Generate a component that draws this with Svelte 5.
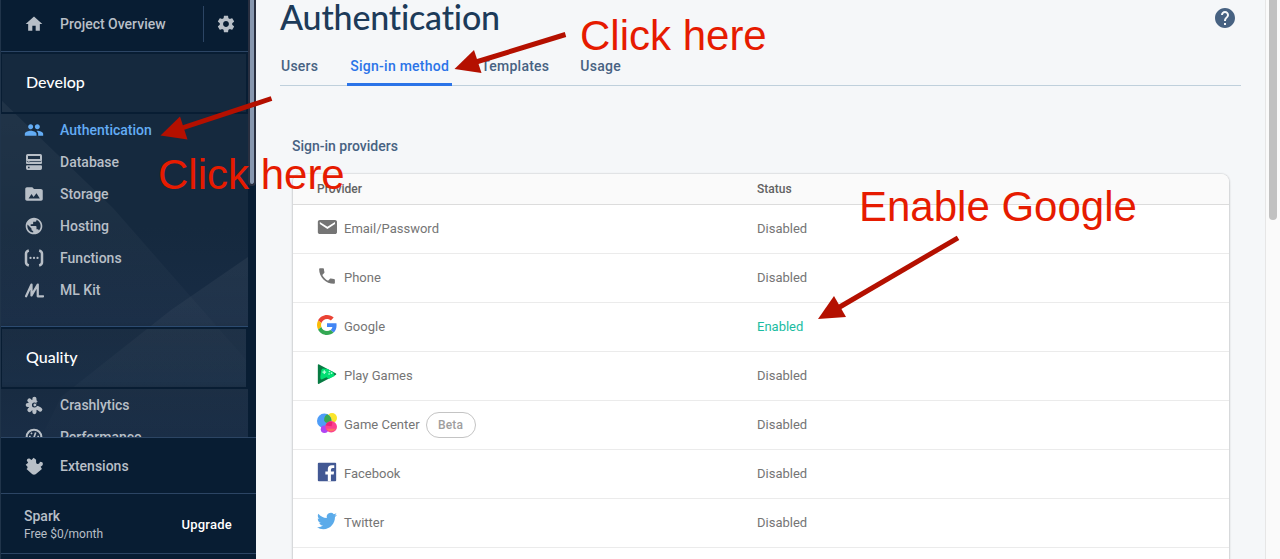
<script>
  const develop = [
    { name: 'Authentication', icon: 'people', active: true },
    { name: 'Database', icon: 'database' },
    { name: 'Storage', icon: 'storage' },
    { name: 'Hosting', icon: 'globe' },
    { name: 'Functions', icon: 'functions' },
    { name: 'ML Kit', icon: 'mlkit' }
  ];
  const quality = [
    { name: 'Crashlytics', icon: 'crash' },
    { name: 'Performance', icon: 'gauge' }
  ];
  const tabs = ['Users', 'Sign-in method', 'Templates', 'Usage'];
  const providers = [
    { name: 'Email/Password', icon: 'mail' },
    { name: 'Phone', icon: 'phone' },
    { name: 'Google', icon: 'google', enabled: true },
    { name: 'Play Games', icon: 'play' },
    { name: 'Game Center', icon: 'gamecenter', beta: true },
    { name: 'Facebook', icon: 'facebook' },
    { name: 'Twitter', icon: 'twitter' }
  ];
</script>

{#snippet icon(name)}
  <svg class="icon" viewBox="0 0 24 24" fill="currentColor" aria-hidden="true">
    {#if name === 'home'}
      <path d="M10 20v-6h4v6h5v-8h3L12 3 2 12h3v8z" />
    {:else if name === 'gear'}
      <path d="M19.43 12.98c.04-.32.07-.64.07-.98s-.03-.66-.07-.98l2.11-1.65c.19-.15.24-.42.12-.64l-2-3.46c-.12-.22-.39-.3-.61-.22l-2.49 1c-.52-.4-1.08-.73-1.69-.98l-.38-2.65C14.46 2.18 14.25 2 14 2h-4c-.25 0-.46.18-.49.42l-.38 2.65c-.61.25-1.17.59-1.69.98l-2.49-1c-.23-.09-.49 0-.61.22l-2 3.46c-.13.22-.07.49.12.64l2.11 1.65c-.04.32-.07.65-.07.98s.03.66.07.98l-2.11 1.65c-.19.15-.24.42-.12.64l2 3.46c.12.22.39.3.61.22l2.49-1c.52.4 1.08.73 1.69.98l.38 2.65c.03.24.24.42.49.42h4c.25 0 .46-.18.49-.42l.38-2.65c.61-.25 1.17-.59 1.69-.98l2.49 1c.23.09.49 0 .61-.22l2-3.46c.12-.22.07-.49-.12-.64l-2.11-1.65zM12 15.500c-1.930 0-3.500-1.570-3.500-3.500s1.570-3.500 3.500-3.500 3.500 1.570 3.500 3.500-1.570 3.500-3.500 3.500z" />
    {:else if name === 'people'}
      <path d="M16 11c1.66 0 2.99-1.34 2.99-3S17.66 5 16 5s-3 1.34-3 3 1.34 3 3 3zm-8 0c1.66 0 2.99-1.34 2.99-3S9.66 5 8 5 5 6.34 5 8s1.34 3 3 3zm0 2c-2.33 0-7 1.17-7 3.5V19h14v-2.5c0-2.33-4.67-3.5-7-3.5zm8 0c-.29 0-.62.02-.97.05 1.16.84 1.97 1.97 1.97 3.45V19h6v-2.5c0-2.33-4.67-3.5-7-3.5z" />
    {:else if name === 'database'}
      <path fill-rule="evenodd" d="M4.400 2.400h15.200a2 2 0 0 1 2 2v5.200q0 2-2 2H4.400q-2 0-2-2V4.400a2 2 0 0 1 2-2zM4.800 4.800v3.600h14.400V4.800zM2.400 10.800h19.200v2.400q0 1.200-1.200 1.200H3.600q-1.200 0-1.200-1.200zM4.800 10.800v1.600h1.900v-1.600zM3.600 15.800h16.800q1.200 0 1.200 1.200v2.600a2 2 0 0 1-2 2H4.400a2 2 0 0 1-2-2V17q0-1.200 1.200-1.200zM4.800 17.600v1.900h1.900v-1.900z" />
    {:else if name === 'storage'}
      <path fill-rule="evenodd" d="M20 6h-8l-2-2H3.500c-1.100 0-2 .9-2 2v12c0 1.100.9 2 2 2h17c1.100 0 2-.9 2-2V8c0-1.100-.9-2-2.500-2zM5.500 17.500l3.500-5.500 2.500 3.500 3.500-4.500 4 6.500z" />
    {:else if name === 'globe'}
      <path d="M12 2C6.480 2 2 6.480 2 12s4.480 10 10 10 10-4.480 10-10S17.520 2 12 2zm-1 17.930c-3.950-.490-7-3.850-7-7.930 0-.620.080-1.210.210-1.790L9 15v1c0 1.100.900 2 2 2v1.930zm6.900-2.540c-.260-.810-1-1.390-1.900-1.390h-1v-3c0-.550-.450-1-1-1H8v-2h2c.550 0 1-.450 1-1V7h2c1.100 0 2-.900 2-2v-.410c2.930 1.190 5 4.060 5 7.410 0 2.080-.800 3.970-2.100 5.390z" />
    {:else if name === 'functions'}
      <path d="M5.800 3Q2.400 4 2.400 7v10q0 3 3.400 4M18.200 3Q21.600 4 21.600 7v10q0 3-3.400 4" fill="none" stroke="currentColor" stroke-width="3" />
      <circle cx="7.800" cy="12" r="1.350" /><circle cx="12" cy="12" r="1.350" /><circle cx="16.200" cy="12" r="1.350" />
    {:else if name === 'mlkit'}
      <path d="M2.500 19.500L9 5.500v12.500M9 18.500L16.500 5.500v14H23" fill="none" stroke="currentColor" stroke-width="2.700" stroke-linejoin="round" stroke-linecap="round" />
    {:else if name === 'crash'}
      <circle cx="12" cy="12" r="6.200" />
      <path d="M12.500 12V4.500M12 12L6.500 6.500M12 12H4.500M12 12L6.500 18M12.500 12v8.500M12 12l7.500 5.500" stroke="currentColor" stroke-width="5" stroke-linecap="round" />
      <path class="hole" d="M15 8.500L20 6v8l-5-1z" />
      <circle class="hole" cx="12.500" cy="12" r="3" />
      <circle cx="13" cy="12" r="1.700" />
    {:else if name === 'gauge'}
      <circle cx="12" cy="12" r="8.800" fill="none" stroke="currentColor" stroke-width="2.500" />
      <path d="M11 15.500L14 6.500M6 11.500h2M16 11.500h2M8.500 7l1 1.500M7 17h10" stroke="currentColor" stroke-width="2" />
    {:else if name === 'extensions'}
      <path d="M2 10.500L5 8 3.300 5.500Q3.500 2.500 6.500 3L9 4.700 11.500 2l3 2.500v3q0 2.500 2.500 2t2-2.500l3 .500q1.500 2 0 4l-2 1.500 1.500 2.500L14 22q-2 1-4 0L3 15.500q2-1 1-3z" />
    {:else if name === 'mail'}
      <path d="M21.600 3.500H3.400C2.100 3.500 1 4.600 1 5.800v12.400c0 1.200 1.100 2.300 2.400 2.300h18.200c1.300 0 2.400-1.100 2.400-2.300V5.800c0-1.200-1.100-2.300-2.400-2.300zm0 5L12.500 14.300 3.400 8.500V6L12.500 11.800 21.600 6z" />
    {:else if name === 'phone'}
      <path d="M6.620 10.790c1.440 2.830 3.760 5.140 6.590 6.590l2.200-2.200c.270-.270.670-.360 1.020-.240 1.120.370 2.330.570 3.570.570.550 0 1 .450 1 1V20c0 .550-.450 1-1 1-9.390 0-17-7.610-17-17 0-.550.450-1 1-1h3.500c.550 0 1 .450 1 1 0 1.250.200 2.450.570 3.570.110.350.030.740-.250 1.020l-2.200 2.200z" transform="translate(-.6 -.6) scale(1.05)" />
    {:else if name === 'google'}
      <g transform="scale(.5)">
        <path fill="#ea4335" d="M24 9.500c3.540 0 6.710 1.220 9.210 3.600l6.850-6.850C35.900 2.380 30.470 0 24 0 14.620 0 6.510 5.380 2.560 13.220l7.980 6.190C12.430 13.720 17.740 9.500 24 9.500z" />
        <path fill="#4285f4" d="M46.980 24.550c0-1.570-.150-3.090-.380-4.550H24v9.020h12.940c-.580 2.960-2.260 5.480-4.780 7.180l7.730 6c4.510-4.180 7.090-10.360 7.090-17.650z" />
        <path fill="#fbbc05" d="M10.530 28.590c-.480-1.450-.760-2.990-.760-4.590s.270-3.140.760-4.590l-7.980-6.190C.920 16.460 0 20.120 0 24s.920 7.540 2.560 10.780l7.970-6.190z" />
        <path fill="#34a853" d="M24 48c6.480 0 11.930-2.130 15.890-5.810l-7.730-6c-2.150 1.450-4.920 2.300-8.160 2.300-6.260 0-11.570-4.220-13.470-9.910l-7.980 6.190C6.510 42.620 14.620 48 24 48z" />
      </g>
    {:else if name === 'play'}
      <path fill="#087b43" d="M1 1.500Q1-.2 2.500.6L22.300 11q1.700 1 0 2.200L2.500 23.800Q1 24.500 1 22.800z" />
      <path fill="#00df72" d="M7 5.500l6 .5 3.500 2.400 2.700 1 2 5-7.200 3.700-2.600-2.200L5.500 18.500Q3.500 18 4 15L5 8q.5-2 2-2.500z" />
      <path fill="#b5ffda" d="M8 7.500h1.500V9H11v1.500H9.500V12H8v-1.500H6.500V9H8z" />
      <circle fill="#b5ffda" cx="15" cy="9" r="1" /><circle fill="#b5ffda" cx="17.500" cy="11" r="1" /><circle fill="#b5ffda" cx="14.500" cy="12" r="1" />
    {:else if name === 'gamecenter'}
      <circle cx="18" cy="6" r="6" fill="#fae52c" />
      <circle cx="8.800" cy="9.500" r="8.800" fill="#4e9df8" />
      <circle cx="9" cy="19.500" r="4.500" fill="#b044f3" />
      <path fill="#38a953" d="M12.200 1.400a8.800 8.800 0 0 1 4.800 10.500Q10 13 8.600 9 8 4 12.200 1.400z" />
      <circle cx="17" cy="16.500" r="7" fill="#fb4090" />
      <path fill="#ed2375" d="M10.200 15Q13 9 18.500 11l-1 5z" />
      <path fill="#fd6d67" d="M11 19h12q-6 6-12 0z" />
    {:else if name === 'facebook'}
      <path fill="#425893" d="M2.200 1h19.600q1.200 0 1.200 1.200v19.600q0 1.200-1.200 1.200H2.200Q1 23 1 21.800V2.200Q1 1 2.200 1z" />
      <path fill="#fff" d="M13 23v-8h-3v-3.700h3V8.500q0-4.700 4.700-4.700l3 .2v3.300h-2q-2 0-2 2v2h3.800l-.5 3.700h-3.300v8z" />
    {:else if name === 'twitter'}
      <path fill="#5babea" d="M23.950 4.570a10 10 0 0 1-2.820.770 4.960 4.960 0 0 0 2.160-2.720c-.950.550-2 .950-3.130 1.180a4.920 4.920 0 0 0-8.380 4.480C7.690 8.090 4.070 6.130 1.640 3.160a4.820 4.820 0 0 0-.670 2.480c0 1.710.870 3.210 2.190 4.100a4.900 4.900 0 0 1-2.230-.620v.060a4.920 4.920 0 0 0 3.950 4.830 5 5 0 0 1-2.210.080 4.940 4.940 0 0 0 4.600 3.420A9.870 9.870 0 0 1 0 19.540a13.990 13.990 0 0 0 7.550 2.210c9.050 0 14-7.500 14-13.990 0-.210 0-.420-.020-.630a9.940 9.940 0 0 0 2.460-2.550z" />
    {:else if name === 'help'}
      <path d="M12 2C6.480 2 2 6.480 2 12s4.480 10 10 10 10-4.480 10-10S17.520 2 12 2zm1 17h-2v-2h2v2zm2.070-7.750l-.900.920C13.450 12.900 13 13.500 13 15h-2v-.500c0-1.100.450-2.100 1.170-2.830l1.240-1.260c.370-.360.590-.860.590-1.410 0-1.100-.900-2-2-2s-2 .900-2 2H8c0-2.210 1.790-4 4-4s4 1.790 4 4c0 .880-.360 1.680-.930 2.250z" />
    {/if}
  </svg>
{/snippet}

{#snippet navItem(item)}
  <div class="nav-item" class:active={item.active}>
    {@render icon(item.icon)}<span>{item.name}</span>
  </div>
{/snippet}

<div class="page">
  <aside>
    <div class="scroll-row">
      <div class="nav">
        <svg class="facets" viewBox="0 0 247 386" aria-hidden="true">
          <defs>
            <linearGradient id="fade" x1="0" y1="0" x2="0" y2="1">
              <stop offset="0" stop-color="#fff" stop-opacity=".05" />
              <stop offset="1" stop-color="#fff" stop-opacity=".005" />
            </linearGradient>
          </defs>
          <path d="M0 48L112 156L190 245L247 310V330H0z" fill="url(#fade)" />
          <path d="M247 205L170 258L60 345L40 386H247z" fill="url(#fade)" />
        </svg>
        <div class="overview">
          {@render icon('home')}<span>Project Overview</span>
          <div class="settings">{@render icon('gear')}</div>
        </div>
        <div class="group-title">Develop</div>
        <div class="items first">
          {#each develop as item}{@render navItem(item)}{/each}
        </div>
        <div class="group-title">Quality</div>
        <div class="items">
          {#each quality as item}{@render navItem(item)}{/each}
        </div>
      </div>
      <div class="side-track"><div class="side-thumb"></div></div>
    </div>
    <div class="extensions">{@render icon('extensions')}<span>Extensions</span></div>
    <div class="plan">
      <div><div class="plan-name">Spark</div><div class="price">Free $0/month</div></div>
      <b>Upgrade</b>
    </div>
  </aside>

  <main>
    <header>
      <h1>Authentication</h1>
      <div class="help">{@render icon('help')}</div>
    </header>
    <nav class="tabs">
      {#each tabs as tab, i}<div class="tab" class:selected={i === 1}>{tab}</div>{/each}
    </nav>
    <h2>Sign-in providers</h2>
    <div class="card">
      <div class="row head"><div>Provider</div><div>Status</div></div>
      {#each providers as p}
        <div class="row">
          <div class="provider">
            <span class="logo">{@render icon(p.icon)}</span><span>{p.name}</span>
            {#if p.beta}<span class="beta">Beta</span>{/if}
          </div>
          <div class:enabled={p.enabled}>{p.enabled ? 'Enabled' : 'Disabled'}</div>
        </div>
      {/each}
    </div>
  </main>
  <div class="track"><div class="thumb"></div></div>

  <svg class="notes" viewBox="0 0 1280 559">
    <g fill="#b41000" stroke="#b41000">
      <path d="M271.500 98.500L182 128" stroke-width="5" />
      <path d="M160.500 135.500L180 116.500 187.500 139.500z" stroke="none" />
      <path d="M565.500 34.500L476 62" stroke-width="5" />
      <path d="M454.500 69L474 50 481.500 73z" stroke="none" />
      <path d="M958 237.800L838 308" stroke-width="5" />
      <path d="M818 319L834 296 846 317z" stroke="none" />
    </g>
    <g class="note-text">
      <text x="158" y="189">Click here</text>
      <text x="580" y="50">Click here</text>
      <text x="859" y="221">Enable Google</text>
    </g>
  </svg>
</div>

<style>
  :global(body) { margin: 0; overflow: hidden; }
  .page { position: relative; display: flex; width: 1280px; height: 559px; overflow: hidden; background: #f5f7f9; font-family: Roboto, sans-serif; }
  .icon { display: block; width: 24px; height: 24px; flex: none; }
  aside { box-sizing: border-box; width: 256px; height: 559px; flex: none; background: #081d33; color: #b8bfc7; font-size: 14px; font-weight: 500; border-left: 1px solid #20344a; }
  .scroll-row { display: flex; height: 437px; }
  .nav { position: relative; width: 247px; height: 437px; overflow: hidden; background: #15293e; }
  .facets { position: absolute; left: 0; top: 52px; width: 247px; height: 386px; background: linear-gradient(#15293e, #15293e 45%, #182c45 70%, #172a40 71%, #192e46 86%, #182b41 87%, #192d46); }
  .overview, .group-title, .items { position: relative; }
  .overview { box-sizing: border-box; display: flex; align-items: center; height: 52px; padding: 0 0 4px 23px; background: #081d33; border-bottom: 1px solid #2c4564; }
  .overview .icon { width: 20px; height: 20px; }
  .overview span { margin-left: 16px; flex: 1; }
  .settings { display: flex; align-items: center; justify-content: center; width: 44px; height: 36px; border-left: 1px solid #2c4564; }
  .group-title { box-sizing: border-box; height: 62px; padding-left: 24px; font: 500 16px/56px Lato, sans-serif; color: #fff; border: solid #081d33; border-width: 2px 2px 2px 1px; }
  .items.first { box-sizing: border-box; height: 213px; border-bottom: 1px solid #2c4b70; }
  .nav-item { display: flex; align-items: center; height: 32px; padding-left: 23px; }
  .nav-item .icon, .extensions .icon { width: 20px; height: 20px; }
  .nav-item span, .extensions span { margin-left: 16px; }
  .nav-item.active { color: #63acf4; }
  .hole { fill: #182c43; }
  .side-track { width: 8px; background: #081d33; }
  .side-thumb { width: 4px; height: 184px; border: solid #292f40; border-width: 0 2px 2px; border-radius: 0 0 4px 4px; background: #8797af; }
  .extensions { box-sizing: border-box; display: flex; align-items: center; height: 57px; padding-left: 23px; border: solid #2c4564; border-width: 1px 0; }
  .plan { box-sizing: border-box; display: flex; align-items: center; justify-content: space-between; height: 60px; padding: 2px 24px 0 23px; border-bottom: 1px solid #2c4564; }
  .plan-name { line-height: 18px; }
  .price { font-size: 12px; font-weight: 400; line-height: 18px; }
  .plan b { font-size: 13px; font-weight: 500; letter-spacing: .25px; color: #fff; }
  main { width: 961px; padding: 0 24px; height: 559px; overflow: hidden; }
  header { display: flex; justify-content: space-between; height: 50px; }
  h1 { margin: 0; font: 500 34px/34px Lato, sans-serif; font-variant-ligatures: none; letter-spacing: -.18px; color: #1d3b59; }
  .help { padding: 6px 4px; color: #476282; }
  .tabs { box-sizing: border-box; display: flex; height: 36px; border-bottom: 1px solid #bfd0dc; gap: 26px; }
  .tab { box-sizing: border-box; height: 36px; line-height: 33px; font-size: 14px; font-weight: 500; color: #476282; letter-spacing: .25px; padding: 0 3px 0 1px; }
  .tab:nth-child(n+3) { padding: 0 2px 0 3px; }
  .tab.selected { color: #2b74e8; padding: 0 3px; border-bottom: 3px solid #2b74e8; border-radius: 3px 3px 0 0; }
  h2 { margin: 50px 12px 17px; height: 21px; font-size: 14px; line-height: 21px; font-weight: 500; color: #476282; }
  .card { margin: 0 12px 0 13px; height: 400px; border-radius: 8px; background: #fff; box-shadow: 0 0 2px rgba(0,0,0,.2), 0 1px 3px rgba(0,0,0,.2); overflow: hidden; }
  .row { box-sizing: border-box; display: grid; grid-template-columns: 440px 1fr; height: 49px; padding-left: 24px; line-height: 48px; border-bottom: 1px solid #ebebeb; color: #757575; font-size: 13px; }
  .row.head { height: 31px; line-height: 30px; background: #fafafa; border-bottom: 1px solid #dcdcdc; font-size: 12px; font-weight: 500; color: #616161; }
  .provider { display: flex; align-items: center; }
  .logo { width: 20px; height: 20px; margin: 0 7px 5px 0; }
  .logo .icon { width: 20px; height: 20px; }
  .beta { box-sizing: border-box; height: 26px; width: 50px; margin-left: 6px; border: 1px solid #c4c4c4; border-radius: 13px; text-align: center; line-height: 24px; font-size: 12px; font-weight: 500; letter-spacing: .15px; color: #9e9e9e; }
  .enabled { color: #1abca1; }
  .track { box-sizing: border-box; width: 15px; height: 559px; padding-left: 3px; background: #fafafa; border-left: 1px solid #e6e6e6; }
  .thumb { width: 8px; height: 220px; border-radius: 0 0 4px 4px; background: #c1c1c1; }
  .notes { position: absolute; inset: 0; width: 1280px; height: 559px; pointer-events: none; }
  .note-text { font: 42px "Liberation Sans", sans-serif; fill: #e61b00; }
</style>
